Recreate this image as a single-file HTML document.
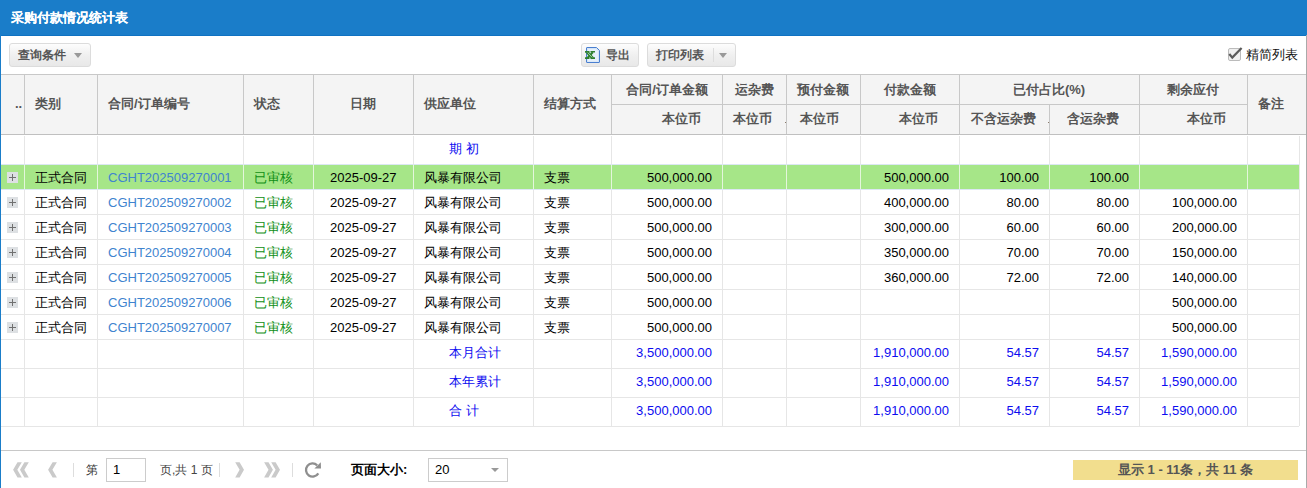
<!DOCTYPE html><html><head><meta charset="utf-8"><style>
*{margin:0;padding:0;box-sizing:border-box}
html,body{width:1307px;height:488px;overflow:hidden;background:#fff}
body{position:relative;font-family:"Liberation Sans",sans-serif;font-size:13px;color:#000}
.abs{position:absolute}
.t{position:absolute;white-space:nowrap;line-height:16px}
.hb{font-weight:bold;color:#555}
.vl{position:absolute;width:1px}
.hl{position:absolute;height:1px}
.lnk{color:#3f84cf}
.grn{color:#0f8f14}
.blu{color:#0c0cf0}
</style></head><body>
<div class="abs" style="left:0;top:0;width:1307px;height:36px;background:#1a7dc9;border-bottom:1px solid #0f72c2"></div>
<div class="t" style="left:11px;top:10px;color:#fff;font-weight:bold;font-size:13px;text-shadow:0 0 0.3px #fff">采购付款情况统计表</div>
<div class="abs" style="left:0;top:0;width:1px;height:488px;background:#1a7dc9"></div>
<div class="abs" style="left:1306px;top:35px;width:1px;height:453px;background:#aaa"></div>
<div class="abs" style="left:9px;top:43px;width:82px;height:24px;background:linear-gradient(#fdfdfd,#f0f0f0 50%,#e8e8e8);border:1px solid #dcdcdc;border-radius:3px"></div>
<div class="t hb" style="left:18px;top:47px;font-size:12px">查询条件</div>
<div class="abs" style="left:74px;top:53px;width:0;height:0;border-left:4px solid transparent;border-right:4px solid transparent;border-top:5px solid #999"></div>
<div class="abs" style="left:581px;top:43px;width:58px;height:24px;background:linear-gradient(#fdfdfd,#f0f0f0 50%,#e8e8e8);border:1px solid #dcdcdc;border-radius:3px"></div>
<svg class="abs" style="left:580px;top:43px" width="24" height="24" viewBox="0 0 24 24"><path d="M7 4.5h9.5l3 3v11.5q0 .5-.5.5H7q-.5 0-.5-.5V5q0-.5.5-.5z" fill="#d3e4f7" stroke="#4a7fd0" stroke-width="1"/><path d="M8 6h8l2 2V18.5H8z" fill="#e6f0fb"/><g stroke="#2f7f2f"><path d="M7.2 9.2L12.8 15.2" stroke-width="2.8"/><path d="M12.8 9.2L7.2 15.2" stroke-width="2"/></g><path d="M5 8h4.5v1.8H5zM10.5 8H15v1.6h-4.5zM5 14.2h4.5v1.8H5zM10.5 14.2H15v1.8h-4.5z" fill="#2f7f2f"/><path d="M7.8 9.6l4.4 4.8" stroke="#bfe6bf" stroke-width="0.8"/></svg>
<div class="t hb" style="left:606px;top:47px;font-size:12px">导出</div>
<div class="abs" style="left:647px;top:43px;width:89px;height:24px;background:linear-gradient(#fdfdfd,#f0f0f0 50%,#e8e8e8);border:1px solid #dcdcdc;border-radius:3px"></div>
<div class="t hb" style="left:656px;top:47px;font-size:12px">打印列表</div>
<div class="abs" style="left:713px;top:48px;width:1px;height:14px;background:#ddd"></div>
<div class="abs" style="left:719px;top:53px;width:0;height:0;border-left:4px solid transparent;border-right:4px solid transparent;border-top:5px solid #999"></div>
<div class="abs" style="left:1228px;top:48px;width:13px;height:13px;border:1px solid #bbb;border-radius:2px;background:#efefef"></div>
<svg class="abs" style="left:1228px;top:47px" width="15" height="13" viewBox="0 0 15 13"><path d="M1.3 7l3 3.6L13.6 1" fill="none" stroke="#5a5a5a" stroke-width="2.2"/></svg>
<div class="t" style="left:1246px;top:47px;color:#111">精简列表</div>
<div class="abs" style="left:1px;top:74px;width:1305px;height:60px;background:#f4f4f4"></div>
<div class="hl" style="left:1px;top:74px;width:1305px;background:#c8c8c8"></div>
<div class="hl" style="left:1px;top:134px;width:1305px;background:#c0c0c0"></div>
<div class="vl" style="left:24px;top:74px;height:60px;background:#c8c8c8"></div>
<div class="vl" style="left:97px;top:74px;height:60px;background:#c8c8c8"></div>
<div class="vl" style="left:243px;top:74px;height:60px;background:#c8c8c8"></div>
<div class="vl" style="left:313px;top:74px;height:60px;background:#c8c8c8"></div>
<div class="vl" style="left:413px;top:74px;height:60px;background:#c8c8c8"></div>
<div class="vl" style="left:533px;top:74px;height:60px;background:#c8c8c8"></div>
<div class="vl" style="left:611px;top:74px;height:60px;background:#c8c8c8"></div>
<div class="vl" style="left:722px;top:74px;height:60px;background:#c8c8c8"></div>
<div class="vl" style="left:786px;top:74px;height:60px;background:#c8c8c8"></div>
<div class="vl" style="left:860px;top:74px;height:60px;background:#c8c8c8"></div>
<div class="vl" style="left:959px;top:74px;height:60px;background:#c8c8c8"></div>
<div class="vl" style="left:1049px;top:74px;height:60px;background:#c8c8c8"></div>
<div class="vl" style="left:1139px;top:74px;height:60px;background:#c8c8c8"></div>
<div class="vl" style="left:1247px;top:74px;height:60px;background:#c8c8c8"></div>
<div class="hl" style="left:611px;top:104px;width:636px;background:#c8c8c8"></div>
<div class="vl" style="left:1049px;top:75px;height:29px;background:#f4f4f4"></div>
<div class="t hb" style="left:15px;top:96px">..</div>
<div class="t hb" style="left:35px;top:96px">类别</div>
<div class="t hb" style="left:108px;top:96px">合同/订单编号</div>
<div class="t hb" style="left:254px;top:96px">状态</div>
<div class="t hb" style="left:263px;top:96px;width:200px;text-align:center">日期</div>
<div class="t hb" style="left:424px;top:96px">供应单位</div>
<div class="t hb" style="left:544px;top:96px">结算方式</div>
<div class="t hb" style="left:1171px;top:96px;width:200px;text-align:center">备注</div>
<div class="t hb" style="left:567px;top:82px;width:200px;text-align:center">合同/订单金额</div>
<div class="t hb" style="left:654px;top:82px;width:200px;text-align:center">运杂费</div>
<div class="t hb" style="left:723px;top:82px;width:200px;text-align:center">预付金额</div>
<div class="t hb" style="left:810px;top:82px;width:200px;text-align:center">付款金额</div>
<div class="t hb" style="left:949px;top:82px;width:200px;text-align:center">已付占比(%)</div>
<div class="t hb" style="left:1093px;top:82px;width:200px;text-align:center">剩余应付</div>
<div class="t hb" style="left:501px;top:111px;width:200px;text-align:right">本位币</div>
<div class="t hb" style="left:572px;top:111px;width:200px;text-align:right">本位币</div>
<div class="t hb" style="left:639px;top:111px;width:200px;text-align:right">本位币</div>
<div class="t hb" style="left:738px;top:111px;width:200px;text-align:right">本位币</div>
<div class="t hb" style="left:836px;top:111px;width:200px;text-align:right">不含运杂费</div>
<div class="t hb" style="left:919px;top:111px;width:200px;text-align:right">含运杂费</div>
<div class="t hb" style="left:1026px;top:111px;width:200px;text-align:right">本位币</div>
<div class="abs" style="left:785px;top:122px;width:1px;height:1px;background:#8a7a6a"></div>
<div class="abs" style="left:1048px;top:122px;width:1px;height:1px;background:#8a7a6a"></div>
<div class="hl" style="left:1px;top:164px;width:1298px;background:#e6e6e6"></div>
<div class="hl" style="left:1px;top:189px;width:1298px;background:#e6e6e6"></div>
<div class="hl" style="left:1px;top:214px;width:1298px;background:#e6e6e6"></div>
<div class="hl" style="left:1px;top:239px;width:1298px;background:#e6e6e6"></div>
<div class="hl" style="left:1px;top:264px;width:1298px;background:#e6e6e6"></div>
<div class="hl" style="left:1px;top:289px;width:1298px;background:#e6e6e6"></div>
<div class="hl" style="left:1px;top:314px;width:1298px;background:#e6e6e6"></div>
<div class="hl" style="left:1px;top:339px;width:1298px;background:#e6e6e6"></div>
<div class="hl" style="left:1px;top:368px;width:1298px;background:#e6e6e6"></div>
<div class="hl" style="left:1px;top:397px;width:1298px;background:#e6e6e6"></div>
<div class="hl" style="left:1px;top:426px;width:1298px;background:#e6e6e6"></div>
<div class="vl" style="left:24px;top:136px;height:290px;background:#e6e6e6"></div>
<div class="vl" style="left:97px;top:136px;height:290px;background:#e6e6e6"></div>
<div class="vl" style="left:243px;top:136px;height:290px;background:#e6e6e6"></div>
<div class="vl" style="left:313px;top:136px;height:290px;background:#e6e6e6"></div>
<div class="vl" style="left:413px;top:136px;height:290px;background:#e6e6e6"></div>
<div class="vl" style="left:533px;top:136px;height:290px;background:#e6e6e6"></div>
<div class="vl" style="left:611px;top:136px;height:290px;background:#e6e6e6"></div>
<div class="vl" style="left:722px;top:136px;height:290px;background:#e6e6e6"></div>
<div class="vl" style="left:786px;top:136px;height:290px;background:#e6e6e6"></div>
<div class="vl" style="left:860px;top:136px;height:290px;background:#e6e6e6"></div>
<div class="vl" style="left:959px;top:136px;height:290px;background:#e6e6e6"></div>
<div class="vl" style="left:1049px;top:136px;height:290px;background:#e6e6e6"></div>
<div class="vl" style="left:1139px;top:136px;height:290px;background:#e6e6e6"></div>
<div class="vl" style="left:1247px;top:136px;height:290px;background:#e6e6e6"></div>
<div class="vl" style="left:1299px;top:136px;height:290px;background:#e6e6e6"></div>
<div class="hl" style="left:1px;top:164px;width:1298px;background:#dce7f3"></div>
<div class="hl" style="left:1px;top:189px;width:1298px;background:#dce7f3"></div>
<div class="abs" style="left:1px;top:165px;width:1298px;height:24px;background:#a6e688"></div>
<div class="vl" style="left:24px;top:165px;height:24px;background:#e4f6dc"></div>
<div class="vl" style="left:97px;top:165px;height:24px;background:#e4f6dc"></div>
<div class="vl" style="left:243px;top:165px;height:24px;background:#e4f6dc"></div>
<div class="vl" style="left:313px;top:165px;height:24px;background:#e4f6dc"></div>
<div class="vl" style="left:413px;top:165px;height:24px;background:#e4f6dc"></div>
<div class="vl" style="left:533px;top:165px;height:24px;background:#e4f6dc"></div>
<div class="vl" style="left:611px;top:165px;height:24px;background:#e4f6dc"></div>
<div class="vl" style="left:722px;top:165px;height:24px;background:#e4f6dc"></div>
<div class="vl" style="left:786px;top:165px;height:24px;background:#e4f6dc"></div>
<div class="vl" style="left:860px;top:165px;height:24px;background:#e4f6dc"></div>
<div class="vl" style="left:959px;top:165px;height:24px;background:#e4f6dc"></div>
<div class="vl" style="left:1049px;top:165px;height:24px;background:#e4f6dc"></div>
<div class="vl" style="left:1139px;top:165px;height:24px;background:#e4f6dc"></div>
<div class="vl" style="left:1247px;top:165px;height:24px;background:#e4f6dc"></div>
<div class="t blu" style="left:449px;top:141px;letter-spacing:4px">期初</div>
<div class="abs" style="left:7px;top:172px;width:11px;height:11px;background:#dde0e3"></div>
<div class="abs" style="left:9px;top:177px;width:7px;height:1px;background:#707070"></div>
<div class="abs" style="left:12px;top:174px;width:1px;height:7px;background:#707070"></div>
<div class="t" style="left:35px;top:170px">正式合同</div>
<div class="t lnk" style="left:108px;top:170px">CGHT202509270001</div>
<div class="t grn" style="left:254px;top:170px">已审核</div>
<div class="t" style="left:330px;top:170px">2025-09-27</div>
<div class="t" style="left:424px;top:170px">风暴有限公司</div>
<div class="t" style="left:544px;top:170px">支票</div>
<div class="t " style="left:512px;top:170px;width:200px;text-align:right">500,000.00</div>
<div class="t " style="left:749px;top:170px;width:200px;text-align:right">500,000.00</div>
<div class="t " style="left:839px;top:170px;width:200px;text-align:right">100.00</div>
<div class="t " style="left:929px;top:170px;width:200px;text-align:right">100.00</div>
<div class="abs" style="left:7px;top:197px;width:11px;height:11px;background:#dde0e3"></div>
<div class="abs" style="left:9px;top:202px;width:7px;height:1px;background:#707070"></div>
<div class="abs" style="left:12px;top:199px;width:1px;height:7px;background:#707070"></div>
<div class="t" style="left:35px;top:195px">正式合同</div>
<div class="t lnk" style="left:108px;top:195px">CGHT202509270002</div>
<div class="t grn" style="left:254px;top:195px">已审核</div>
<div class="t" style="left:330px;top:195px">2025-09-27</div>
<div class="t" style="left:424px;top:195px">风暴有限公司</div>
<div class="t" style="left:544px;top:195px">支票</div>
<div class="t " style="left:512px;top:195px;width:200px;text-align:right">500,000.00</div>
<div class="t " style="left:749px;top:195px;width:200px;text-align:right">400,000.00</div>
<div class="t " style="left:839px;top:195px;width:200px;text-align:right">80.00</div>
<div class="t " style="left:929px;top:195px;width:200px;text-align:right">80.00</div>
<div class="t " style="left:1037px;top:195px;width:200px;text-align:right">100,000.00</div>
<div class="abs" style="left:7px;top:222px;width:11px;height:11px;background:#dde0e3"></div>
<div class="abs" style="left:9px;top:227px;width:7px;height:1px;background:#707070"></div>
<div class="abs" style="left:12px;top:224px;width:1px;height:7px;background:#707070"></div>
<div class="t" style="left:35px;top:220px">正式合同</div>
<div class="t lnk" style="left:108px;top:220px">CGHT202509270003</div>
<div class="t grn" style="left:254px;top:220px">已审核</div>
<div class="t" style="left:330px;top:220px">2025-09-27</div>
<div class="t" style="left:424px;top:220px">风暴有限公司</div>
<div class="t" style="left:544px;top:220px">支票</div>
<div class="t " style="left:512px;top:220px;width:200px;text-align:right">500,000.00</div>
<div class="t " style="left:749px;top:220px;width:200px;text-align:right">300,000.00</div>
<div class="t " style="left:839px;top:220px;width:200px;text-align:right">60.00</div>
<div class="t " style="left:929px;top:220px;width:200px;text-align:right">60.00</div>
<div class="t " style="left:1037px;top:220px;width:200px;text-align:right">200,000.00</div>
<div class="abs" style="left:7px;top:247px;width:11px;height:11px;background:#dde0e3"></div>
<div class="abs" style="left:9px;top:252px;width:7px;height:1px;background:#707070"></div>
<div class="abs" style="left:12px;top:249px;width:1px;height:7px;background:#707070"></div>
<div class="t" style="left:35px;top:245px">正式合同</div>
<div class="t lnk" style="left:108px;top:245px">CGHT202509270004</div>
<div class="t grn" style="left:254px;top:245px">已审核</div>
<div class="t" style="left:330px;top:245px">2025-09-27</div>
<div class="t" style="left:424px;top:245px">风暴有限公司</div>
<div class="t" style="left:544px;top:245px">支票</div>
<div class="t " style="left:512px;top:245px;width:200px;text-align:right">500,000.00</div>
<div class="t " style="left:749px;top:245px;width:200px;text-align:right">350,000.00</div>
<div class="t " style="left:839px;top:245px;width:200px;text-align:right">70.00</div>
<div class="t " style="left:929px;top:245px;width:200px;text-align:right">70.00</div>
<div class="t " style="left:1037px;top:245px;width:200px;text-align:right">150,000.00</div>
<div class="abs" style="left:7px;top:272px;width:11px;height:11px;background:#dde0e3"></div>
<div class="abs" style="left:9px;top:277px;width:7px;height:1px;background:#707070"></div>
<div class="abs" style="left:12px;top:274px;width:1px;height:7px;background:#707070"></div>
<div class="t" style="left:35px;top:270px">正式合同</div>
<div class="t lnk" style="left:108px;top:270px">CGHT202509270005</div>
<div class="t grn" style="left:254px;top:270px">已审核</div>
<div class="t" style="left:330px;top:270px">2025-09-27</div>
<div class="t" style="left:424px;top:270px">风暴有限公司</div>
<div class="t" style="left:544px;top:270px">支票</div>
<div class="t " style="left:512px;top:270px;width:200px;text-align:right">500,000.00</div>
<div class="t " style="left:749px;top:270px;width:200px;text-align:right">360,000.00</div>
<div class="t " style="left:839px;top:270px;width:200px;text-align:right">72.00</div>
<div class="t " style="left:929px;top:270px;width:200px;text-align:right">72.00</div>
<div class="t " style="left:1037px;top:270px;width:200px;text-align:right">140,000.00</div>
<div class="abs" style="left:7px;top:297px;width:11px;height:11px;background:#dde0e3"></div>
<div class="abs" style="left:9px;top:302px;width:7px;height:1px;background:#707070"></div>
<div class="abs" style="left:12px;top:299px;width:1px;height:7px;background:#707070"></div>
<div class="t" style="left:35px;top:295px">正式合同</div>
<div class="t lnk" style="left:108px;top:295px">CGHT202509270006</div>
<div class="t grn" style="left:254px;top:295px">已审核</div>
<div class="t" style="left:330px;top:295px">2025-09-27</div>
<div class="t" style="left:424px;top:295px">风暴有限公司</div>
<div class="t" style="left:544px;top:295px">支票</div>
<div class="t " style="left:512px;top:295px;width:200px;text-align:right">500,000.00</div>
<div class="t " style="left:1037px;top:295px;width:200px;text-align:right">500,000.00</div>
<div class="abs" style="left:7px;top:322px;width:11px;height:11px;background:#dde0e3"></div>
<div class="abs" style="left:9px;top:327px;width:7px;height:1px;background:#707070"></div>
<div class="abs" style="left:12px;top:324px;width:1px;height:7px;background:#707070"></div>
<div class="t" style="left:35px;top:320px">正式合同</div>
<div class="t lnk" style="left:108px;top:320px">CGHT202509270007</div>
<div class="t grn" style="left:254px;top:320px">已审核</div>
<div class="t" style="left:330px;top:320px">2025-09-27</div>
<div class="t" style="left:424px;top:320px">风暴有限公司</div>
<div class="t" style="left:544px;top:320px">支票</div>
<div class="t " style="left:512px;top:320px;width:200px;text-align:right">500,000.00</div>
<div class="t " style="left:1037px;top:320px;width:200px;text-align:right">500,000.00</div>
<div class="t blu" style="left:449px;top:345px">本月合计</div>
<div class="t blu" style="left:512px;top:345px;width:200px;text-align:right">3,500,000.00</div>
<div class="t blu" style="left:749px;top:345px;width:200px;text-align:right">1,910,000.00</div>
<div class="t blu" style="left:839px;top:345px;width:200px;text-align:right">54.57</div>
<div class="t blu" style="left:929px;top:345px;width:200px;text-align:right">54.57</div>
<div class="t blu" style="left:1037px;top:345px;width:200px;text-align:right">1,590,000.00</div>
<div class="t blu" style="left:449px;top:374px">本年累计</div>
<div class="t blu" style="left:512px;top:374px;width:200px;text-align:right">3,500,000.00</div>
<div class="t blu" style="left:749px;top:374px;width:200px;text-align:right">1,910,000.00</div>
<div class="t blu" style="left:839px;top:374px;width:200px;text-align:right">54.57</div>
<div class="t blu" style="left:929px;top:374px;width:200px;text-align:right">54.57</div>
<div class="t blu" style="left:1037px;top:374px;width:200px;text-align:right">1,590,000.00</div>
<div class="t blu" style="left:449px;top:403px">合 计</div>
<div class="t blu" style="left:512px;top:403px;width:200px;text-align:right">3,500,000.00</div>
<div class="t blu" style="left:749px;top:403px;width:200px;text-align:right">1,910,000.00</div>
<div class="t blu" style="left:839px;top:403px;width:200px;text-align:right">54.57</div>
<div class="t blu" style="left:929px;top:403px;width:200px;text-align:right">54.57</div>
<div class="t blu" style="left:1037px;top:403px;width:200px;text-align:right">1,590,000.00</div>
<div class="hl" style="left:1px;top:450px;width:1305px;background:#c8c8c8"></div>
<svg class="abs" style="left:0;top:450px" width="340" height="38" viewBox="0 450 340 38"><g fill="#cacaca"><path d="M17.5 462.2H21.8L17.3 469.8L21.8 477.6H17.5L13.1 469.8Z"/><path d="M24.4 462.2H28.8L24.3 469.8L28.8 477.6H24.4L20 469.8Z"/><path d="M52.6 462.2H56.9L52.4 469.8L56.9 477.6H52.6L48.1 469.8Z"/><path d="M235.2 462.2H239.6L244 469.8L239.6 477.6H235.2L239.6 469.8Z"/><path d="M264.1 462.2H268.5L272.9 469.8L268.5 477.6H264.1L268.5 469.8Z"/><path d="M271.2 462.2H275.6L280 469.8L275.6 477.6H271.2L275.6 469.8Z"/></g><g fill="#ddd"><rect x="73" y="463" width="1" height="14"/><rect x="219" y="463" width="1" height="14"/><rect x="292" y="463" width="1" height="14"/></g><path d="M317.2 465.3A6.6 6.6 0 1 0 318.3 473.4" fill="none" stroke="#8f8f8f" stroke-width="2.3"/><path d="M320.8 462.2L321 468.6L314.4 468.6Z" fill="#8f8f8f"/></svg>
<div class="t" style="left:86px;top:462px;color:#333;font-size:12px">第</div>
<div class="abs" style="left:106px;top:458px;width:40px;height:24px;border:1px solid #ccc"></div>
<div class="t" style="left:113px;top:462px;color:#000">1</div>
<div class="t" style="left:160px;top:462px;color:#444;font-size:12px">页,共 1 页</div>
<div class="t" style="left:351px;top:462px;font-weight:bold;color:#000">页面大小:</div>
<div class="abs" style="left:428px;top:458px;width:80px;height:24px;border:1px solid #ccc"></div>
<div class="t" style="left:435px;top:462px">20</div>
<div class="abs" style="left:491px;top:468px;width:0;height:0;border-left:4.5px solid transparent;border-right:4.5px solid transparent;border-top:4.5px solid #999"></div>
<div class="abs" style="left:1073px;top:460px;width:225px;height:20px;background:#f2de8e"></div>
<div class="t" style="left:1073px;top:462px;width:225px;text-align:center;font-weight:bold;color:#555">显示 1 - 11条，共 11 条</div>
</body></html>
